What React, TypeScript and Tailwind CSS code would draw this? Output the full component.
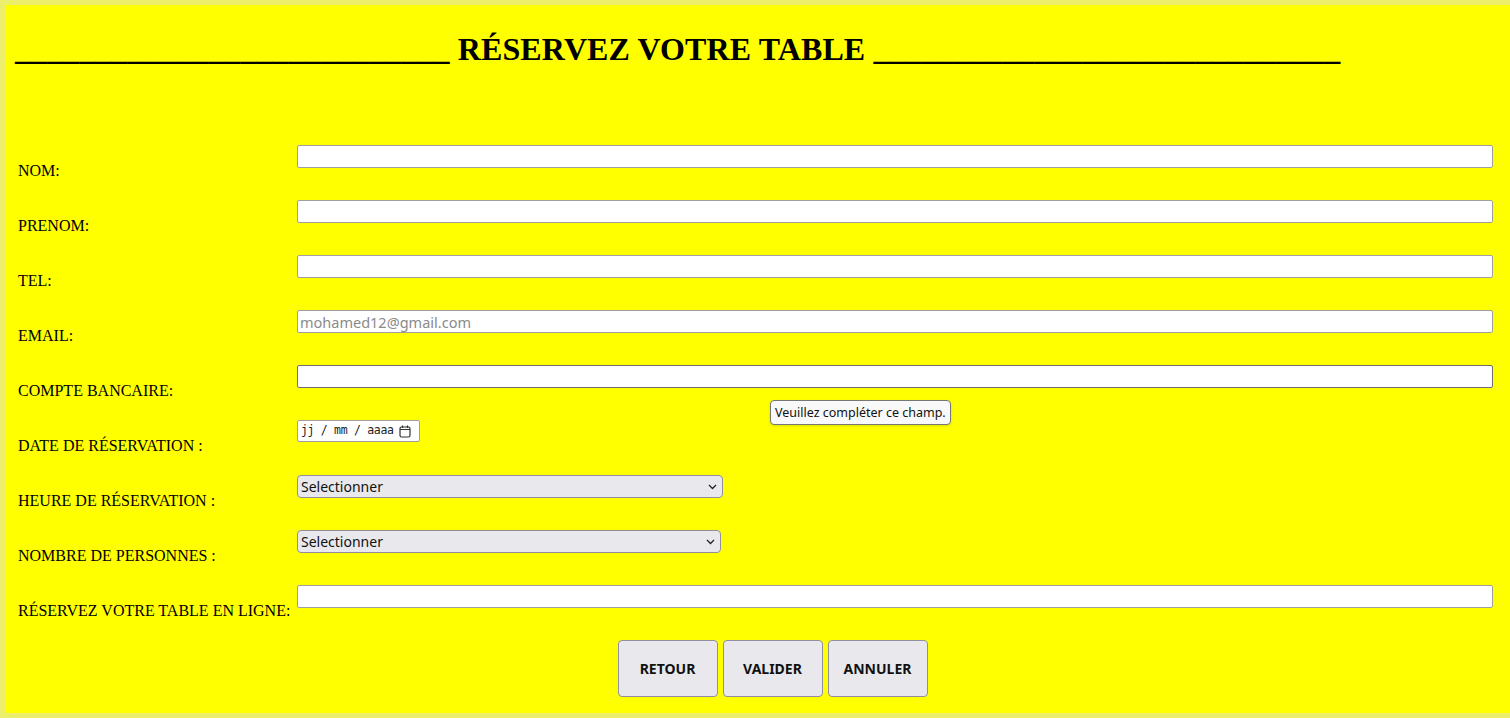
import React from 'react';

const fields = [
  { label: 'NOM:', kind: 'text' },
  { label: 'PRENOM:', kind: 'text' },
  { label: 'TEL:', kind: 'text' },
  { label: 'EMAIL:', kind: 'email' },
  { label: 'COMPTE BANCAIRE:', kind: 'focus' },
  { label: 'DATE DE RÉSERVATION :', kind: 'date' },
  { label: 'HEURE DE RÉSERVATION :', kind: 'select', width: 'w-[426px]' },
  { label: 'NOMBRE DE PERSONNES :', kind: 'select', width: 'w-[424px]' },
  { label: 'RÉSERVEZ VOTRE TABLE EN LIGNE:', kind: 'text' },
];

function Chevron() {
  return (
    <svg width="9" height="6" viewBox="0 0 9 6" fill="none" stroke="#222" strokeWidth="1.3">
      <path d="M1 1l3.5 3.5L8 1" />
    </svg>
  );
}

function Field({ kind, width }: { kind: string; width?: string }) {
  if (kind === 'date') {
    return (
      <div className="flex h-[22px] w-[123px] items-center gap-[5px] rounded-[2px] border border-[#a0a0a0] bg-white pl-[3px] font-['DejaVu_Sans_Mono',monospace] text-[11.5px] tracking-[-0.3px] text-[#222]">
        <span>jj / mm / aaaa</span>
        <svg width="12" height="13" viewBox="0 0 12 13" fill="none" stroke="#333" strokeWidth="1.2">
          <rect x="1" y="2" width="10" height="10" rx="1.5" />
          <path d="M1 4.5h10M3.5 0.5v2.5M8.5 0.5v2.5" />
        </svg>
      </div>
    );
  }
  if (kind === 'select') {
    return (
      <div className={`flex h-[23px] ${width} items-center justify-between rounded-[4px] border border-[#8f8f9d] bg-[#e9e9ed] pl-[3px] pr-[5px] font-['Noto_Sans',sans-serif] text-[14px] text-[#111]`}>
        <span>Selectionner</span>
        <Chevron />
      </div>
    );
  }
  return (
    <input
      type="text"
      placeholder={kind === 'email' ? 'mohamed12@gmail.com' : ''}
      className={`h-[23px] w-full rounded-[2px] border bg-white px-[2px] font-['Noto_Sans',sans-serif] text-[14.5px] placeholder:text-[#8a8a8a] ${
        kind === 'focus' ? 'border-[#6e6e6e]' : 'border-[#a0a0a0]'
      }`}
    />
  );
}

export default function App() {
  return (
    <div className="h-[718px] w-[1510px] overflow-hidden bg-[#ecef6c] pl-[6px] pt-[5px] pb-[5px]">
      <div className="relative h-[708px] bg-[#ffff00] pl-[12px] pr-[17px] pt-[26px] font-['Liberation_Serif',serif] text-black">
        <h1 className="-ml-[3px] mb-[77px] whitespace-pre text-[32px] font-bold leading-[37px] tracking-[0.1px]">
          ___________________________ RÉSERVEZ VOTRE TABLE _____________________________
        </h1>

        <div className="flex flex-col">
          {fields.map((f) => (
            <div key={f.label} className="flex h-[55px] items-start">
              <div className="w-[279px] shrink-0 whitespace-nowrap pt-[16px] text-[16px] leading-[19px]">
                {f.label}
              </div>
              <div className="flex-1">
                <Field kind={f.kind} width={f.width} />
              </div>
            </div>
          ))}
        </div>

        <div className="flex justify-center gap-[5px] pl-[34px]">
          {['RETOUR', 'VALIDER', 'ANNULER'].map((b) => (
            <button
              key={b}
              className="h-[57px] w-[100px] rounded-[4px] border border-[#8f8f9d] bg-[#e9e9ed] font-['Noto_Sans',sans-serif] text-[14px] font-bold text-[#111]"
            >
              {b}
            </button>
          ))}
        </div>

        <div className="absolute left-[764px] top-[395px] rounded-[4px] border border-[#767676] bg-[#f9f9f9] px-[4px] py-[3px] font-['Noto_Sans',sans-serif] text-[12.5px] leading-[17px] text-[#111] shadow-sm">
          Veuillez compléter ce champ.
        </div>
      </div>
    </div>
  );
}
